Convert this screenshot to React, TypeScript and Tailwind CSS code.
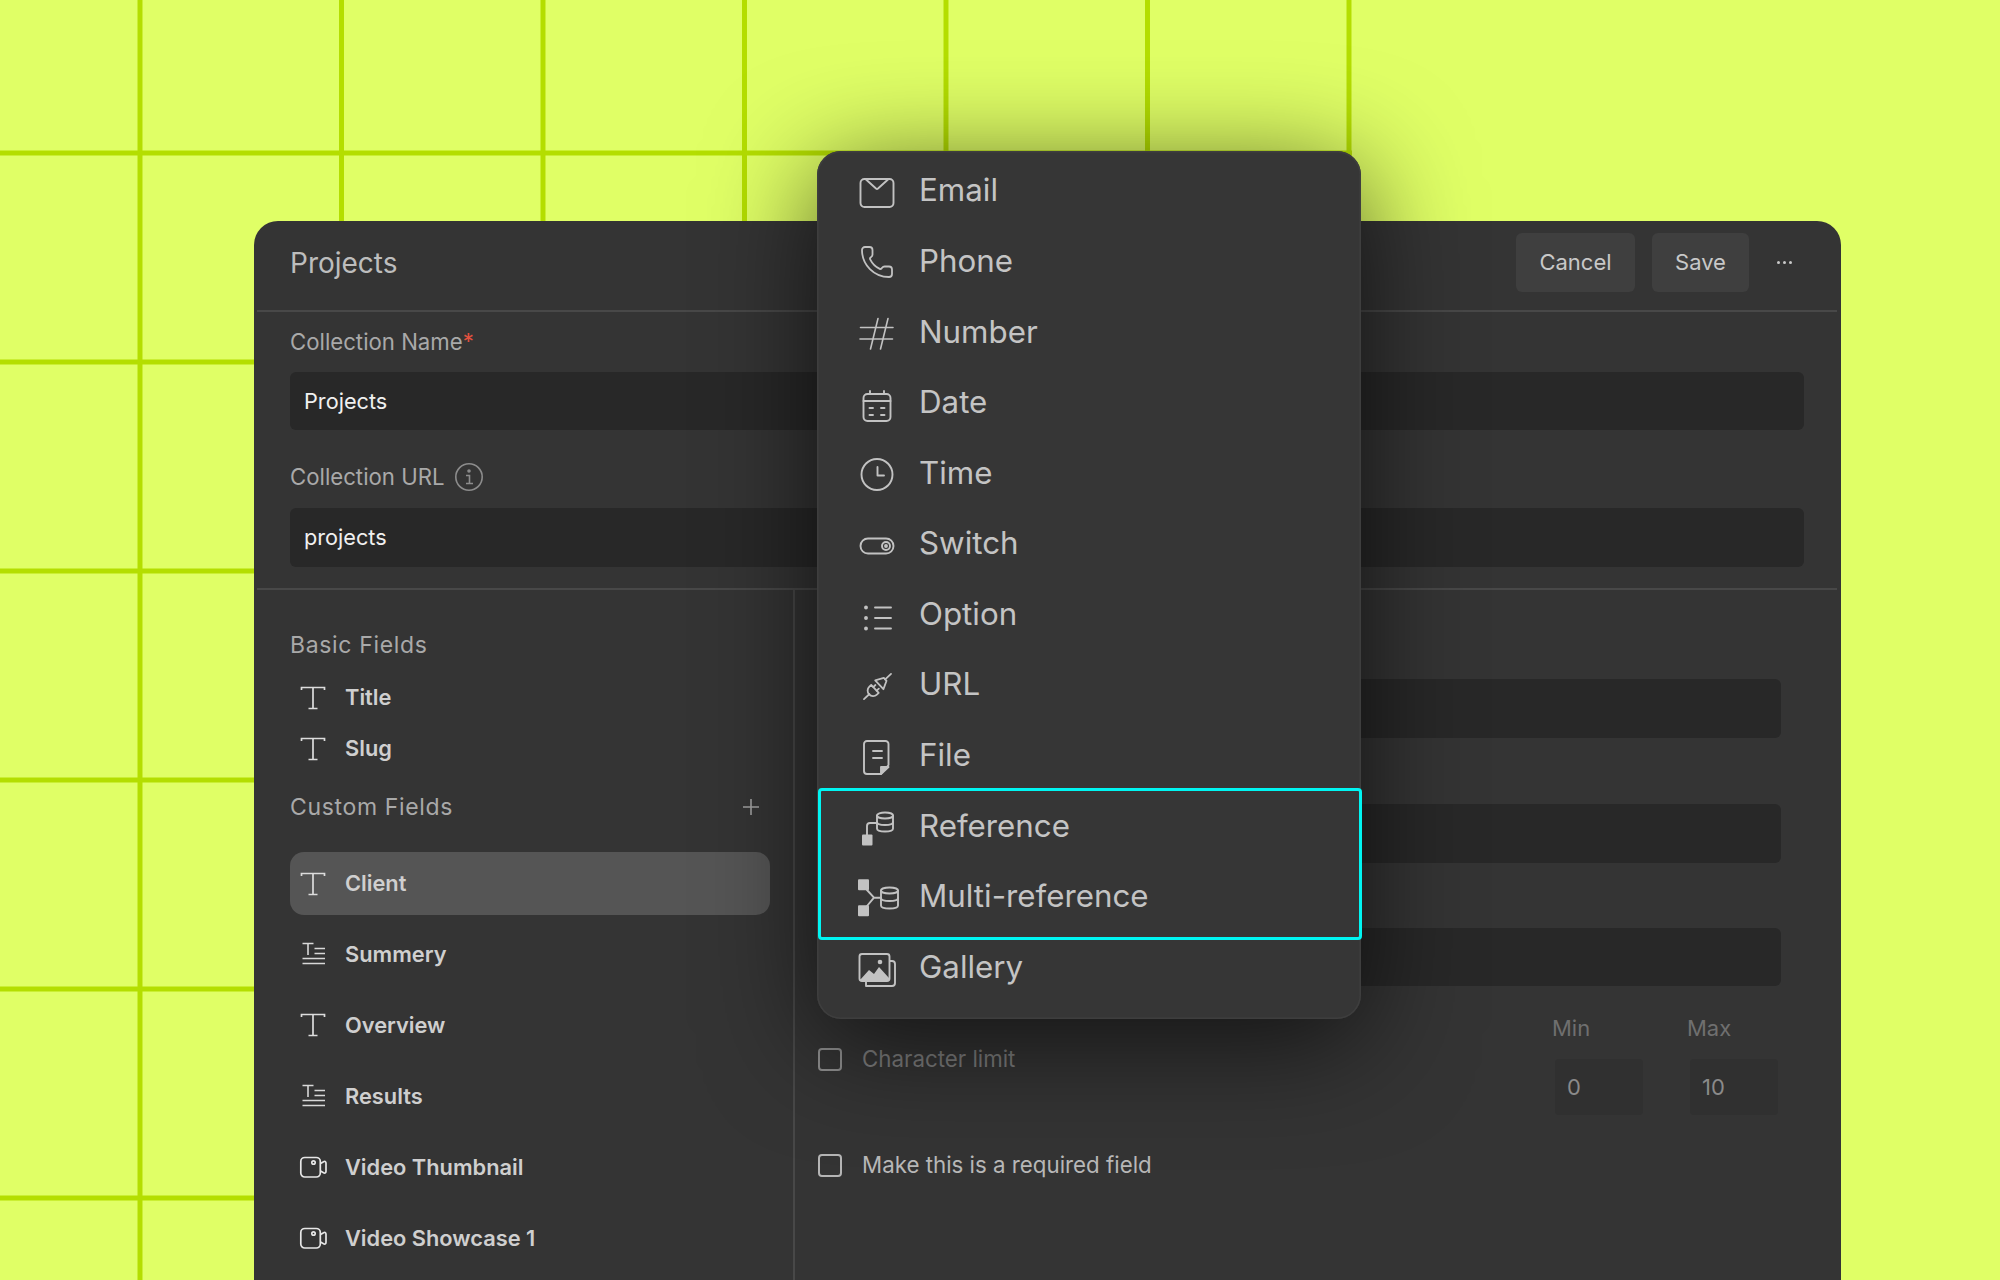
import React from "react";
import { Phone } from "lucide-react";

const ic = { fill: "none", stroke: "#c2c2c2", strokeWidth: 1.9, strokeLinecap: "round" as const, strokeLinejoin: "round" as const };

function Db({ cx, top, bottom, rx }: { cx: number; top: number; bottom: number; rx: number }) {
  const ry = 3;
  const mid = (top + ry + bottom - ry) / 2;
  return (
    <g {...ic}>
      <ellipse cx={cx} cy={top + ry} rx={rx} ry={ry} />
      <path d={`M${cx - rx} ${top + ry}V${bottom - ry}C${cx - rx} ${bottom + 1} ${cx + rx} ${bottom + 1} ${cx + rx} ${bottom - ry}V${top + ry}`} />
      <path d={`M${cx - rx} ${mid}C${cx - rx} ${mid + 4} ${cx + rx} ${mid + 4} ${cx + rx} ${mid}`} />
    </g>
  );
}

function Box({ children }: { children: React.ReactNode }) {
  return (
    <svg width="36" height="36" viewBox="0 0 36 36" className="shrink-0 overflow-visible">
      {children}
    </svg>
  );
}

const menuItems: { label: string; icon: React.ReactNode }[] = [
  { label: "Email", icon: <Box><g {...ic}><rect x="1.5" y="6" width="33" height="28" rx="4" /><path d="M7 6.5 17 15.5Q18 16.3 19 15.5L29 6.5" /></g></Box> },
  { label: "Phone", icon: <Phone size={36} strokeWidth={1.2} color="#c2c2c2" className="shrink-0" /> },
  { label: "Number", icon: <Box><g {...ic} strokeWidth={1.6}><path d="M1.5 13.5H34M1 25H33.5M19 4.5 11.5 35M29 4.5 21.5 35" /></g></Box> },
  { label: "Date", icon: <Box><g {...ic}><rect x="4.5" y="9" width="27" height="27" rx="4" /><path d="M4.5 16H31.5M11 6V9M25 6V9M10.5 23H14M22 23H25.5M10.5 30H14M22 30H25.5" /></g></Box> },
  { label: "Time", icon: <Box><g {...ic}><circle cx="18" cy="19.5" r="15.5" /><path d="M18.5 12V20.5H25" /></g></Box> },
  { label: "Switch", icon: <Box><g {...ic}><rect x="1.5" y="12.5" width="33" height="15" rx="7.5" /><circle cx="27" cy="20" r="4" /><circle cx="27" cy="20" r="1" fill="#c2c2c2" /></g></Box> },
  { label: "Option", icon: <Box><g {...ic}><path d="M16 10.5H32M16 21H32M16 31.5H32" /><circle cx="7" cy="10.5" r="1" fill="#c2c2c2" /><circle cx="7" cy="21" r="1" fill="#c2c2c2" /><circle cx="7" cy="31.5" r="1" fill="#c2c2c2" /></g></Box> },
  {
    label: "URL",
    icon: (
      <Box>
        <g {...ic} strokeWidth={1.8} transform="translate(18.5 19.5) rotate(-43)">
          <path d="M-18.5 0H-11" />
          <path d="M-3.5 -5.5V5.5H-6A5.5 5.5 0 0 1 -6 -5.5Z" />
          <path d="M-3.5 -2.5H-0.5M-3.5 2.5H-0.5" />
          <path d="M2.5 -6V6L10.5 2V-2Z" />
          <path d="M10.5 0H18.5" />
        </g>
      </Box>
    ),
  },
  { label: "File", icon: <Box><g {...ic}><path d="M8 3H26A3 3 0 0 1 29.5 6V27L22 36H8A3 3 0 0 1 5 33V6A3 3 0 0 1 8 3Z" /><path d="M14 13H23M14 20H23" /><path d="M22 36V29H29.5Z" fill="#c2c2c2" /></g></Box> },
];

const highlighted: { label: string; icon: React.ReactNode }[] = [
  { label: "Reference", icon: <Box><Db cx={26} top={4.5} bottom={23.5} rx={8} /><rect x="3" y="26.5" width="10.5" height="11" rx="1" fill="#c2c2c2" /><path d="M8 27V18A3 3 0 0 1 11 15H18" {...ic} /></Box> },
  { label: "Multi-reference", icon: <Box><Db cx={30.5} top={8.5} bottom={29.5} rx={8.5} /><rect x="-1" y="0.3" width="11" height="11" rx="1" fill="#c2c2c2" /><rect x="-1" y="26.3" width="11" height="11" rx="1" fill="#c2c2c2" /><path d="M8 11 15 18.7 8 27M15 18.7H22" {...ic} /></Box> },
];

const gallery = { label: "Gallery", icon: <Box><g {...ic}><rect x="0.5" y="4" width="30" height="27" rx="2.5" /><path d="M7 31V36H33A3 3 0 0 0 36 33V14A3 3 0 0 0 33 11H31" /></g><path d="M1 30 10 20 15 24 20 17 30 28V31H1Z" fill="#c2c2c2" /><circle cx="21" cy="12" r="2.3" fill="#c2c2c2" /></Box> };

function MenuRow({ label, icon }: { label: string; icon: React.ReactNode }) {
  return (
    <div className="flex h-[70.6px] items-center gap-[24px] pl-[42px] text-[31.3px] leading-none text-[#c4c4c4]">
      {icon}
      <span>{label}</span>
    </div>
  );
}

function TIcon() {
  return (
    <svg width="26" height="26" viewBox="0 0 26 26" className="shrink-0 overflow-visible" fill="none" stroke="#dcdcdc" strokeWidth="1.7">
      <path d="M1.5 5V2.5H24.5V5M13 2.5V23.5M8.5 23.5H17.5" />
    </svg>
  );
}
function LinesIcon() {
  return (
    <svg width="26" height="26" viewBox="0 0 26 26" className="shrink-0 overflow-visible" fill="none" stroke="#d8d8d8" strokeWidth="1.6">
      <path d="M2.5 2.5H13.5M8 2.5V14M14.5 7.5H25M14.5 12.5H25M2.5 17.5H25M2.5 22.5H25" />
    </svg>
  );
}
function VideoIcon() {
  return (
    <svg width="26" height="26" viewBox="0 0 26 26" className="shrink-0 overflow-visible" fill="none" stroke="#e6e6e6" strokeWidth="1.7">
      <rect x="0.8" y="3.5" width="19.5" height="19.5" rx="4" />
      <circle cx="13.5" cy="8.5" r="1.7" />
      <path d="M20.5 9.5 24 7.5Q26 7 26 9.5V17Q26 19.5 24 19L20.5 17" />
    </svg>
  );
}

const customFields = [
  { label: "Summery", icon: <LinesIcon /> },
  { label: "Overview", icon: <TIcon /> },
  { label: "Results", icon: <LinesIcon /> },
  { label: "Video Thumbnail", icon: <VideoIcon /> },
  { label: "Video Showcase 1", icon: <VideoIcon /> },
];

function FieldRow({ icon, label, active }: { icon: React.ReactNode; label: string; active?: boolean }) {
  return (
    <div className={`flex w-[480px] shrink-0 items-center gap-[19px] rounded-[14px] pl-[10px] text-[21.8px] font-semibold text-[#cfcfcf] ${active ? "h-[63px] bg-[#555555]" : "h-[62px]"}`}>
      {icon}
      <span>{label}</span>
    </div>
  );
}

function Check({ dim, label }: { dim?: boolean; label: string }) {
  return (
    <div className="flex h-[24px] items-center gap-[20px]">
      <span className={`h-[23px] w-[24px] rounded-[4px] border-2 ${dim ? "border-[#8f8f8f]" : "border-[#b5b5b5]"}`} />
      <span className={`text-[22.3px] ${dim ? "text-[#7d7d7d]" : "text-[#b8b8b8]"}`}>{label}</span>
    </div>
  );
}

export default function App() {
  return (
    <div className="relative h-[1280px] w-[2000px] overflow-hidden bg-[#e0ff66] pl-[254px] pt-[221px] font-['Inter',sans-serif]">
      <div className="absolute left-0 top-0 h-full w-[1352px] bg-[linear-gradient(to_right,#b4de00_4.5px,transparent_4.5px),linear-gradient(to_bottom,#b4de00_4.5px,transparent_4.5px)] bg-[size:201.5px_209px] bg-[position:137.5px_150.5px]" />

      {/* panel */}
      <div className="relative flex h-[1059px] w-[1587px] flex-col overflow-hidden rounded-t-[24px] bg-[#343434] pl-[3px] pr-[4px]">
        <header className="flex h-[91px] shrink-0 items-center border-b-2 border-[#484848] pb-[6px] pl-[33px] pr-[26px]">
          <span className="mt-[1px] text-[28px] text-[#bdbdbd]">Projects</span>
          <div className="ml-auto flex items-center gap-[16px]">
            <button className="mr-[1px] flex h-[59px] w-[119px] items-center justify-center rounded-[6px] bg-[#3f3f3f] text-[22px] text-[#c8c8c8]">Cancel</button>
            <button className="mr-[1px] flex h-[59px] w-[97px] items-center justify-center rounded-[6px] bg-[#3f3f3f] text-[22px] text-[#c8c8c8]">Save</button>
            <div className="ml-[11px] mr-[19px] flex items-center gap-[3px]">
              <span className="h-[3px] w-[3px] rounded-full bg-[#c8c8c8]" />
              <span className="h-[3px] w-[3px] rounded-full bg-[#c8c8c8]" />
              <span className="h-[3px] w-[3px] rounded-full bg-[#c8c8c8]" />
            </div>
          </div>
        </header>

        <section className="flex h-[278px] shrink-0 flex-col border-b-2 border-[#484848] pl-[33px] pr-[33px]">
          <div className="mt-[16px] flex h-[27px] items-center text-[22.2px] text-[#a9a9a9]">
            Collection Name<span className="text-[#e2513f]">*</span>
          </div>
          <div className="mt-[17px] flex h-[58px] items-center rounded-[6px] bg-[#282828] pl-[14px] text-[21.7px] text-[#f0f0f0]">Projects</div>
          <div className="mt-[32px] flex h-[30px] items-center gap-[9px] text-[22.2px] text-[#a9a9a9]">
            Collection URL
            <svg width="30" height="30" viewBox="0 0 30 30" fill="none" stroke="#8c8c8c" strokeWidth="1.6">
              <circle cx="15" cy="15" r="13.2" />
              <path d="M12 13.5H15.5V21.5M12 21.5H19" />
              <circle cx="15" cy="9" r="1" fill="#8c8c8c" />
            </svg>
          </div>
          <div className="mt-[16px] flex h-[59px] items-center rounded-[6px] bg-[#282828] pl-[14px] text-[21.7px] text-[#f0f0f0]">projects</div>
        </section>

        <div className="flex min-h-0 flex-1">
          <aside className="flex w-[538px] shrink-0 flex-col border-r-2 border-[#484848] pl-[33px]">
            <div className="mt-[41px] flex h-[28px] items-center text-[23px] tracking-[0.65px] text-[#a9a9a9]">Basic Fields</div>
            <div className="mt-[13px] flex flex-col">
              <div className="flex h-[51px] items-center gap-[19px] pl-[10px] text-[21.8px] font-semibold text-[#cfcfcf]"><TIcon /><span>Title</span></div>
              <div className="flex h-[51px] items-center gap-[19px] pl-[10px] text-[21.8px] font-semibold text-[#cfcfcf]"><TIcon /><span>Slug</span></div>
            </div>
            <div className="mt-[18px] flex h-[30px] w-[480px] items-center justify-between text-[23px] tracking-[0.65px] text-[#a9a9a9]">
              Custom Fields
              <svg width="20" height="20" viewBox="0 0 20 20" stroke="#a0a0a0" strokeWidth="1.6" className="mr-[9px]"><path d="M10 2V18M2 10H18" /></svg>
            </div>
            <div className="mt-[30px] flex flex-col gap-[9px]">
              <FieldRow active icon={<TIcon />} label="Client" />
              <div className="-mt-[1px] flex flex-col gap-[9px]">
                {customFields.map((f) => (
                  <FieldRow key={f.label} icon={f.icon} label={f.label} />
                ))}
              </div>
            </div>
          </aside>

          <main className="flex min-w-0 flex-1 flex-col pl-[23px] pr-[56px] pt-[89px]">
            <div className="h-[59px] shrink-0 rounded-[6px] bg-[#282828]" />
            <div className="mt-[66px] h-[59px] shrink-0 rounded-[6px] bg-[#282828]" />
            <div className="mt-[65px] h-[58px] shrink-0 rounded-[6px] bg-[#282828]" />
            <div className="mt-[30px] flex justify-between">
              <div className="pt-[31px]"><Check dim label="Character limit" /></div>
              <div className="flex gap-[47px] pr-[3px]">
                {["0", "10"].map((v, i) => (
                  <div key={v} className="flex w-[88px] flex-col">
                    <span className="-ml-[3px] flex h-[24px] items-center text-[22px] text-[#6f6f6f]">{i === 0 ? "Min" : "Max"}</span>
                    <span className="mt-[19px] flex h-[56px] items-center rounded-[4px] bg-[#303030] pl-[12px] text-[22px] text-[#8a8a8a]">{v}</span>
                  </div>
                ))}
              </div>
            </div>
            <div className="mt-[38px]"><Check label="Make this is a required field" /></div>
          </main>
        </div>
      </div>

      {/* dropdown menu */}
      <div className="absolute left-[817px] top-[150.5px] h-[868px] w-[544px] rounded-[24px] bg-[#363636] pt-[5.2px] shadow-[0_20px_110px_rgba(0,0,0,0.65),inset_0_0_0_1.5px_#3e3e3e]">
        {menuItems.map((m) => <MenuRow key={m.label} {...m} />)}
        <div className="relative">
          {highlighted.map((m) => <MenuRow key={m.label} {...m} />)}
          <div className="pointer-events-none absolute left-[1px] right-[-1px] top-[-3px] h-[152px] rounded-[4px] border-[3.5px] border-[#00f5f2]" />
        </div>
        <MenuRow {...gallery} />
      </div>
    </div>
  );
}
